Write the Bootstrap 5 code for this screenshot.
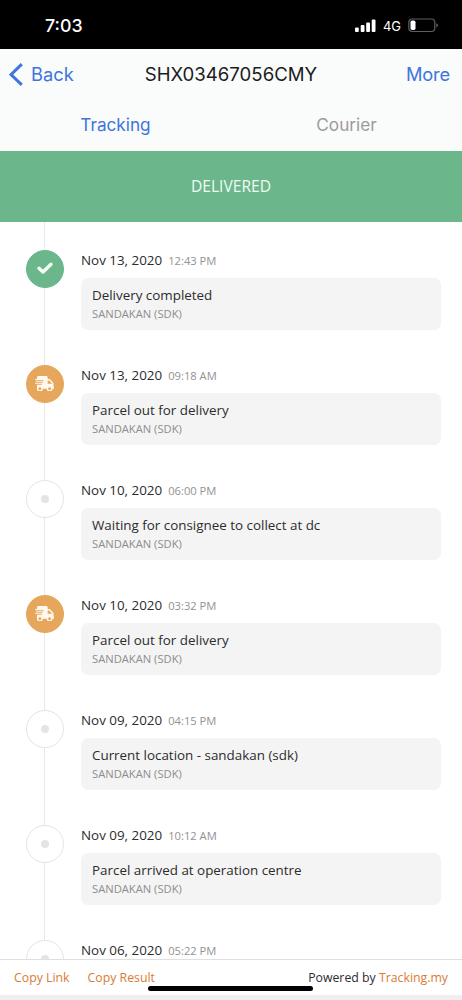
<!DOCTYPE html>
<html lang="en">
<head>
<meta charset="utf-8">
<meta name="viewport" content="width=device-width, initial-scale=1">
<title>Parcel tracking</title>
<link href="https://cdn.jsdelivr.net/npm/bootstrap@5.3.0/dist/css/bootstrap.min.css" rel="stylesheet">
<style>
body{font-family:"Open Sans",sans-serif;color:#2c2c2c;background:#fff}
.screen{height:1000px;overflow:hidden}
.ios{font-family:Inter,"Liberation Sans",sans-serif}
.status{height:49px;background:#000;color:#fff;padding:1px 24px 0 45px}
.clock{font-size:17.8px;font-weight:500;line-height:49px}
.net{font-size:13px;line-height:20px;margin:2px 7px 0 7px}
.top-area{height:102px;background:#fafbfb}
.titlebar{height:50px;font-size:18.3px;line-height:50px;padding:0 12px 0 9px}
.blue{color:#3d76dd}
.more{letter-spacing:-.15px}
.back-text{font-weight:400;letter-spacing:0}
.ttl{font-weight:400;color:#1c1c1c;font-size:18.6px}
.tabs{height:52px;line-height:51px;font-size:17.2px}
.tabs .text-grey{color:#9b9b9b}
.banner{height:70.5px;background:#6bb78b;color:#f1fbf2;font-size:15.6px;line-height:70.5px}
.timeline{padding:27.5px 21.5px 0 25.5px}
.timeline::before{content:"";position:absolute;left:43.5px;top:0;bottom:0;width:1.5px;background:#e8e8ea}
.event{height:115px;gap:17.5px}
.dot{width:38px;height:38px;flex:none;margin-top:.5px;border-radius:50%;background:#fff;border:1px solid #e4e4e4}
.dot i{width:8px;height:8px;border-radius:50%;background:#e4e4e4}
.dot.done{background:#6bb78b;border-color:#6bb78b}
.dot.out{background:#e6a65b;border-color:#e6a65b}
.when{font-size:13.4px;line-height:22px}
.when span{font-size:11.2px;color:#929292;margin-left:6px}
.info{height:51.5px;margin-top:6px;border-radius:7px;background:#f4f4f4;padding:7px 11px}
.info div{font-size:13.4px;line-height:20px}
.info p{font-size:11.2px;line-height:17px;color:#8d8d8d}
.foot{height:41px;background:#fff;border-top:1px solid #dfdfdf;border-bottom:5px solid #efeff1;font-size:12.3px;line-height:35px;padding:0 14px;gap:18px}
.orange{color:#d87c35}
.home{left:148px;bottom:9px;width:165px;height:5.5px;border-radius:3px;background:#000}
</style>
</head>
<body>
<div class="screen d-flex flex-column position-relative">
  <header class="status ios d-flex align-items-center">
    <span class="clock me-auto">7:03</span>
    <svg width="22" height="15" fill="#fff"><rect x="1" y="9.500" width="3.800" height="4.500" rx="1"/><rect x="6.700" y="7" width="3.800" height="7" rx="1"/><rect x="12.200" y="4.500" width="3.800" height="9.500" rx="1"/><rect x="17.700" y="1.500" width="3.800" height="12.500" rx="1"/></svg>
    <span class="net">4G</span>
    <svg width="30" height="15"><rect x=".8" y="1" width="26" height="12.5" rx="3.5" fill="none" stroke="#5f5f5f" stroke-width="1.2"/><rect x="2.5" y="2.6" width="5" height="9.3" rx="1.7" fill="#fff"/><path d="M28.3 5.200q1.500.7 1.500 2t-1.500 2z" fill="#666"/></svg>
  </header>
  <div class="top-area ios">
    <div class="titlebar d-flex align-items-center justify-content-between position-relative">
      <a class="blue text-decoration-none d-flex align-items-center"><svg width="14" height="23" class="me-2" fill="none" stroke="#3d76dd" stroke-width="3"><path d="M12.800 1.200 2 11.600l10.800 10.200"/></svg><span class="back-text">Back</span></a>
      <span class="ttl position-absolute start-0 end-0 text-center pe-none">SHX03467056CMY</span>
      <a class="blue more text-decoration-none">More</a>
    </div>
    <div class="tabs row g-0 text-center"><div class="col-6 blue">Tracking</div><div class="col-6 text-grey">Courier</div></div>
  </div>
  <div class="banner text-center flex-shrink-0">DELIVERED</div>
  <main class="timeline position-relative flex-grow-1 overflow-hidden" id="timeline"></main>
  <footer class="foot d-flex flex-shrink-0">
    <a class="orange text-decoration-none">Copy Link</a>
    <a class="orange text-decoration-none">Copy Result</a>
    <span class="ms-auto">Powered by <span class="orange">Tracking.my</span></span>
  </footer>
  <div class="home position-absolute"></div>
</div>
<script>
const events = [
  ["Nov 13, 2020","12:43 PM","Delivery completed","done"],
  ["Nov 13, 2020","09:18 AM","Parcel out for delivery","out"],
  ["Nov 10, 2020","06:00 PM","Waiting for consignee to collect at dc",""],
  ["Nov 10, 2020","03:32 PM","Parcel out for delivery","out"],
  ["Nov 09, 2020","04:15 PM","Current location - sandakan (sdk)",""],
  ["Nov 09, 2020","10:12 AM","Parcel arrived at operation centre",""],
  ["Nov 06, 2020","05:22 PM","",""]
];
const icons = {
  done:'<svg width="18" height="16" fill="none" stroke="#f6fff4" stroke-width="3.4" stroke-linecap="round" stroke-linejoin="round"><path d="M3 7.200 7 11 15 3.200"/></svg>',
  out:'<svg width="19.500" height="15.600" viewBox="0 0 640 512" fill="#fff8ee"><path d="M624 352h-16V243.900c0-12.700-5.100-24.900-14.100-33.900L494 110.100c-9-9-21.200-14.100-33.900-14.100H416V48c0-26.500-21.500-48-48-48H112C85.500 0 64 21.500 64 48v48H8c-4.400 0-8 3.600-8 8v16c0 4.400 3.600 8 8 8h272c4.400 0 8 3.600 8 8v16c0 4.400-3.600 8-8 8H40c-4.400 0-8 3.600-8 8v16c0 4.400 3.600 8 8 8h208c4.400 0 8 3.600 8 8v16c0 4.400-3.600 8-8 8H8c-4.400 0-8 3.600-8 8v16c0 4.400 3.600 8 8 8h208c4.400 0 8 3.600 8 8v16c0 4.400-3.600 8-8 8H64v128c0 53 43 96 96 96s96-43 96-96h128c0 53 43 96 96 96s96-43 96-96h48c8.800 0 16-7.200 16-16v-32c0-8.800-7.200-16-16-16zM160 464c-26.500 0-48-21.500-48-48s21.500-48 48-48 48 21.500 48 48-21.500 48-48 48zm320 0c-26.500 0-48-21.500-48-48s21.500-48 48-48 48 21.500 48 48-21.500 48-48 48zm80-208H416V144h44.100l99.900 99.900V256z"/></svg>',
  "":'<i></i>'
};
document.getElementById("timeline").innerHTML = events.map(([d,t,m,k]) => `
<article class="event d-flex position-relative">
  <div class="dot ${k} d-flex align-items-center justify-content-center">${icons[k]}</div>
  <div class="flex-grow-1"><div class="when">${d}<span>${t}</span></div>
  ${m ? `<div class="info"><div>${m}</div><p class="mb-0">SANDAKAN (SDK)</p></div>` : ""}</div>
</article>`).join("");
</script>
<script src="https://cdn.jsdelivr.net/npm/bootstrap@5.3.0/dist/js/bootstrap.bundle.min.js"></script>
</body>
</html>
